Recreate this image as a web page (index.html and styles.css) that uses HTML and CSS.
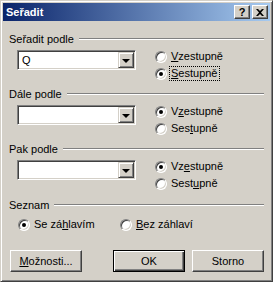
FILE: index.html
```html
<!DOCTYPE html>
<html lang="cs">
<head>
    <meta charset="UTF-8">
    <title>Seřadit</title>
    <link rel="stylesheet" href="styles.css">
</head>
<body>
    <div class="dialog">
        <div class="titlebar">
            <span class="title">Seřadit</span>
            <span class="cap-btn help">?</span>
            <span class="cap-btn close">
                <svg width="8" height="7" viewBox="0 0 8 7"><path d="M0 0h2l2 2 2-2h2L5 3.5 8 7H6L4 5 2 7H0l3-3.5z" fill="#000"/></svg>
            </span>
        </div>
        <div class="client">
            <!-- prvni klic -->
            <div class="group first">
                <div class="group-head"><span>Seřadit podle</span><i class="rule"></i></div>
                <div class="group-body">
                    <div class="combo"><span class="combo-text">Q</span><span class="drop"><i class="arrow"></i></span></div>
                    <div class="radios">
                        <div class="radio"><span class="circle"></span><span class="txt"><u>V</u>zestupně</span></div>
                        <div class="radio checked"><span class="circle"></span><span class="txt focus"><u>S</u>estupně</span></div>
                    </div>
                </div>
            </div>
            <!-- druhy klic -->
            <div class="group">
                <div class="group-head"><span>Dále podle</span><i class="rule"></i></div>
                <div class="group-body">
                    <div class="combo"><span class="combo-text"></span><span class="drop"><i class="arrow"></i></span></div>
                    <div class="radios">
                        <div class="radio checked"><span class="circle"></span><span class="txt">V<u>z</u>estupně</span></div>
                        <div class="radio"><span class="circle"></span><span class="txt">Ses<u>t</u>upně</span></div>
                    </div>
                </div>
            </div>
            <!-- treti klic -->
            <div class="group">
                <div class="group-head"><span>Pak podle</span><i class="rule"></i></div>
                <div class="group-body">
                    <div class="combo"><span class="combo-text"></span><span class="drop"><i class="arrow"></i></span></div>
                    <div class="radios">
                        <div class="radio checked"><span class="circle"></span><span class="txt">Vz<u>e</u>stupně</span></div>
                        <div class="radio"><span class="circle"></span><span class="txt">Sest<u>u</u>pně</span></div>
                    </div>
                </div>
            </div>
            <!-- seznam -->
            <div class="group list">
                <div class="group-head"><span>Seznam</span><i class="rule"></i></div>
                <div class="list-body">
                    <div class="radio checked wide"><span class="circle"></span><span class="txt">Se zá<u>h</u>lavím</span></div>
                    <div class="radio"><span class="circle"></span><span class="txt"><u>B</u>ez záhlaví</span></div>
                </div>
            </div>
            <div class="buttons">
                <span class="btn"><u>M</u>ožnosti...</span>
                <span class="btn default">OK</span>
                <span class="btn">Storno</span>
            </div>
        </div>
    </div>
</body>
</html>
```

FILE: styles.css
```css
body {
    margin: 0;
    padding: 0;
    background-color: #d4d0c8;
    font-family: "Liberation Sans", Arial, sans-serif;
    font-size: 11px;
    color: #000;
}

.dialog {
    width: 273px;
    height: 282px;
    box-sizing: border-box;
    padding: 2px;
    border: 1px solid;
    border-color: #d4d0c8 #404040 #404040 #d4d0c8;
    box-shadow: inset 1px 1px #fff, inset -1px -1px #808080;
    background-color: #d4d0c8;
}

.titlebar {
    height: 18px;
    display: flex;
    align-items: center;
    padding: 0 2px 0 3px;
    background: linear-gradient(to right, #0a246a, #a6caf0);
}

.title {
    flex: 1;
    color: #fff;
    font-weight: bold;
    font-size: 11px;
}

.cap-btn {
    width: 16px;
    height: 14px;
    box-sizing: border-box;
    display: flex;
    align-items: center;
    justify-content: center;
    background-color: #d4d0c8;
    border: 1px solid;
    border-color: #fff #404040 #404040 #fff;
    box-shadow: inset -1px -1px #808080;
    font-weight: bold;
    font-size: 11px;
    line-height: 1;
}

.close {
    margin-left: 2px;
}

.client {
    padding: 0 6px;
}

.group {
    margin-top: 5px;
}

.group.first {
    margin-top: 11px;
}

.group.list {
    margin-top: 6px;
}

.group-head {
    display: flex;
    align-items: center;
    height: 13px;
}

.rule {
    flex: 1;
    height: 0;
    margin-left: 5px;
    border-top: 1px solid #808080;
    border-bottom: 1px solid #fff;
}

.group-body {
    display: flex;
    align-items: flex-start;
    padding-left: 8px;
}

.combo {
    width: 119px;
    height: 20px;
    margin-top: 5px;
    box-sizing: border-box;
    display: flex;
    background-color: #fff;
    border: 1px solid;
    border-color: #808080 #fff #fff #808080;
    box-shadow: inset 1px 1px #404040, inset -1px -1px #d4d0c8;
    padding: 1px;
}

.combo-text {
    flex: 1;
    padding-left: 3px;
    line-height: 16px;
}

.drop {
    width: 16px;
    height: 16px;
    box-sizing: border-box;
    display: flex;
    align-items: center;
    justify-content: center;
    background-color: #d4d0c8;
    border: 1px solid;
    border-color: #d4d0c8 #404040 #404040 #d4d0c8;
    box-shadow: inset 1px 1px #fff, inset -1px -1px #808080;
}

.arrow {
    width: 0;
    height: 0;
    border-left: 4px solid transparent;
    border-right: 4px solid transparent;
    border-top: 4px solid #000;
    margin-top: 1px;
}

.radios {
    margin-left: 19px;
    margin-top: 3px;
}

.radio {
    display: flex;
    align-items: center;
    height: 17px;
}

.circle {
    position: relative;
    width: 12px;
    height: 12px;
    box-sizing: border-box;
    border-radius: 50%;
    background-color: #fff;
    border: 1px solid;
    border-color: #808080 #fff #fff #808080;
    box-shadow: inset 1px 1px #404040, inset -1px -1px #d4d0c8;
}

.radio.checked .circle::after {
    content: "";
    position: absolute;
    left: 3px;
    top: 3px;
    width: 4px;
    height: 4px;
    border-radius: 50%;
    background-color: #000;
}

.txt {
    margin-left: 2px;
    padding: 0 1px;
    line-height: 13px;
    border: 1px solid transparent;
}

.txt.focus {
    border: 1px dotted #000;
}

.list-body {
    display: flex;
    margin-top: 5px;
    padding-left: 9px;
}

.radio.wide {
    width: 102px;
}

.buttons {
    display: flex;
    margin-top: 17px;
    padding-left: 1px;
}

.btn {
    width: 72px;
    height: 22px;
    box-sizing: border-box;
    display: flex;
    align-items: center;
    justify-content: center;
    border: 1px solid;
    border-color: #fff #404040 #404040 #fff;
    box-shadow: inset -1px -1px #808080;
}

.btn.default {
    margin-left: auto;
    border: 1px solid #000;
    box-shadow: inset 1px 1px #fff, inset -1px -1px #404040, inset -2px -2px #808080;
}

.btn + .btn.default + .btn {
    margin-left: 7px;
}
```
